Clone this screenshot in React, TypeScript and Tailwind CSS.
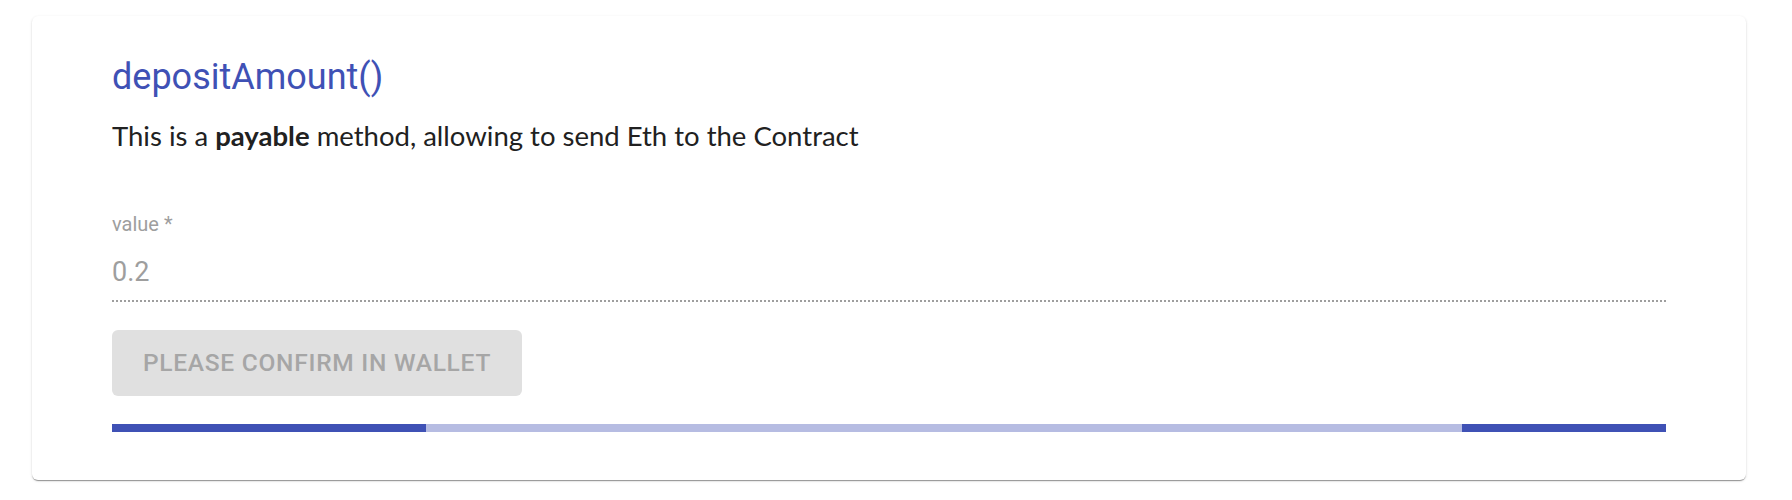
export default function App() {
  return (
    <div className="min-h-[500px] bg-white pt-[16px] pl-[32px]">
      <div className="w-[1714px] rounded-[6px] bg-white px-[80px] pt-[39px] pb-[48px] shadow-[0px_2px_1px_-1px_rgba(0,0,0,0.25),0px_1px_1px_0px_rgba(0,0,0,0.16),0px_1px_3px_0px_rgba(0,0,0,0.12)]">
        <h2 className="font-['Roboto',sans-serif] text-[36px] leading-[44px] font-normal text-[#3f51b5]">
          depositAmount()
        </h2>
        <p className="mt-[20px] font-['Lato',sans-serif] text-[27.5px] leading-[34px] text-[#212121]">
          This is a <b className="font-bold">payable</b> method, allowing to send Eth to the Contract
        </p>

        <div className="mt-[59px] font-['Roboto',sans-serif]">
          <label className="block text-[20px] leading-[24px] text-[#9e9e9e]">value *</label>
          <div className="mt-[20px] border-b-2 border-dotted border-[#9e9e9e] pb-[12px] text-[27px] leading-[32px] text-[#9e9e9e]">
            0.2
          </div>
        </div>

        <button
          disabled
          className="mt-[28px] flex h-[66px] w-[410px] items-center justify-center rounded-[6px] bg-[#e0e0e0] font-['Roboto',sans-serif] text-[24.5px] font-medium tracking-[0.03em] text-[#a6a6a6]"
        >
          PLEASE CONFIRM IN WALLET
        </button>

        <div className="mt-[28px] flex h-[8px] w-full">
          <div className="w-[314px] bg-[#3f51b5]" />
          <div className="flex-1 bg-[#b6bce2]" />
          <div className="w-[204px] bg-[#3f51b5]" />
        </div>
      </div>
    </div>
  );
}
